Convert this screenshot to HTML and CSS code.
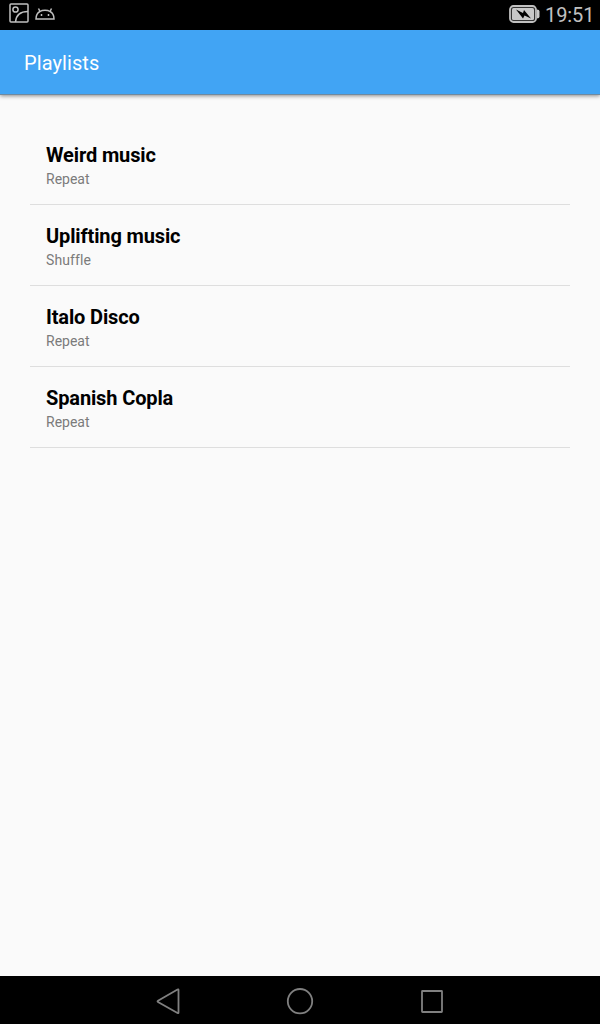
FILE: index.html
```html
<!DOCTYPE html>
<html lang="en">
<head>
<meta charset="utf-8">
<title>Playlists</title>
<link rel="stylesheet" href="styles.css">
</head>
<body>
<header class="status">
  <svg class="picture" width="20" height="20" viewBox="0 0 20 20"><rect x="1" y="1" width="18" height="18" rx="1"/><circle cx="6.500" cy="6.500" r="2.600"/><path d="M6.500 19C7 13 11 8.500 19 8.500"/></svg>
  <svg class="android" width="20" height="14" viewBox="0 0 20 14"><path d="M1 12C1 8 3 5.500 5 4.500C7.500 2.700 12.500 2.700 15 4.500C17 5.500 19 8 19 12ZM5 4.500L3.500 1.500M15 4.500L16.500 1.500"/><path d="M6.500 7v2M13.500 7v2"/></svg>
  <svg class="battery" width="31" height="18" viewBox="0 0 31 18"><rect class="shell" x="1" y="1" width="26" height="16" rx="3.500"/><rect class="fill" x="3" y="3" width="22" height="12" rx="1.500"/><path class="fill" d="M28 4.500q2.500 0 2.500 2v5q0 2-2.500 2z"/><path class="bolt" d="M7 4.500L14 8L15 5L22 13.500L15.500 10.500L14 13.500Z"/></svg>
  <span class="clock">19:51</span>
</header>
<div class="appbar"><h1>Playlists</h1></div>
<main class="list">
  <section class="row"><h2>Weird music</h2><p>Repeat</p></section>
  <section class="row"><h2>Uplifting music</h2><p class="wide">Shuffle</p></section>
  <section class="row"><h2>Italo Disco</h2><p>Repeat</p></section>
  <section class="row"><h2>Spanish Copla</h2><p>Repeat</p></section>
</main>
<nav class="nav">
  <svg width="28" height="28" viewBox="0 0 28 28"><path d="M24.500 3V25.500Q24.500 26.500 23.500 26L4 15Q3 14.300 4 13.700L23.500 2.500Q24.500 2 24.500 3Z"/></svg>
  <svg width="28" height="28" viewBox="0 0 28 28"><circle cx="14" cy="14.200" r="12.200"/></svg>
  <svg width="28" height="28" viewBox="0 0 28 28"><rect x="4" y="4" width="20" height="21" rx="0.500"/></svg>
</nav>
</body>
</html>
```
FILE: styles.css
```css
* { box-sizing: border-box; margin: 0; }
body { height: 1024px; display: flex; flex-direction: column; background: #fafafa; font-family: Roboto, sans-serif; font-variant-ligatures: none; }
svg { fill: none; stroke: #c0c0c0; stroke-width: 1.5; flex: none; }
.status { height: 30px; background: #000; display: flex; padding-left: 9px; }
.picture { margin-top: 3px; }
.android { margin: 7px 0 0 6px; }
.battery { margin: 5px 5px 0 auto; }
.shell { stroke-width: 1.8; fill: #333; }
.fill { fill: #c8c8c8; stroke: none; }
.bolt { fill: #000; stroke: none; }
.clock { color: #c0c0c0; font-size: 20px; line-height: 30px; width: 55px; letter-spacing: -.1px; }
.appbar { height: 65px; background: #41a4f4; padding: 0 24px; border-bottom: 1px solid #6f8aa0; box-shadow: 0 1px 4px rgba(0,0,0,.45); }
.appbar h1 { color: #fff; font-size: 20px; font-weight: 400; line-height: 66px; letter-spacing: .08px; }
.list { flex: 1; padding: 29px 30px 0; }
.row { height: 81px; padding: 19px 16px 0; border-bottom: 1px solid #dedede; }
.row h2 { font-size: 20px; line-height: 24px; font-weight: 700; color: #000; letter-spacing: -.13px; }
.row p { font-size: 14px; line-height: 17px; margin-top: 4px; color: #7b7b7b; }
.row .wide { letter-spacing: .12px; }
.nav { height: 48px; background: #000; display: flex; justify-content: center; align-items: center; gap: 104px; padding-top: 2px; }
.nav svg { stroke: #808080; stroke-width: 1.8; }
```
